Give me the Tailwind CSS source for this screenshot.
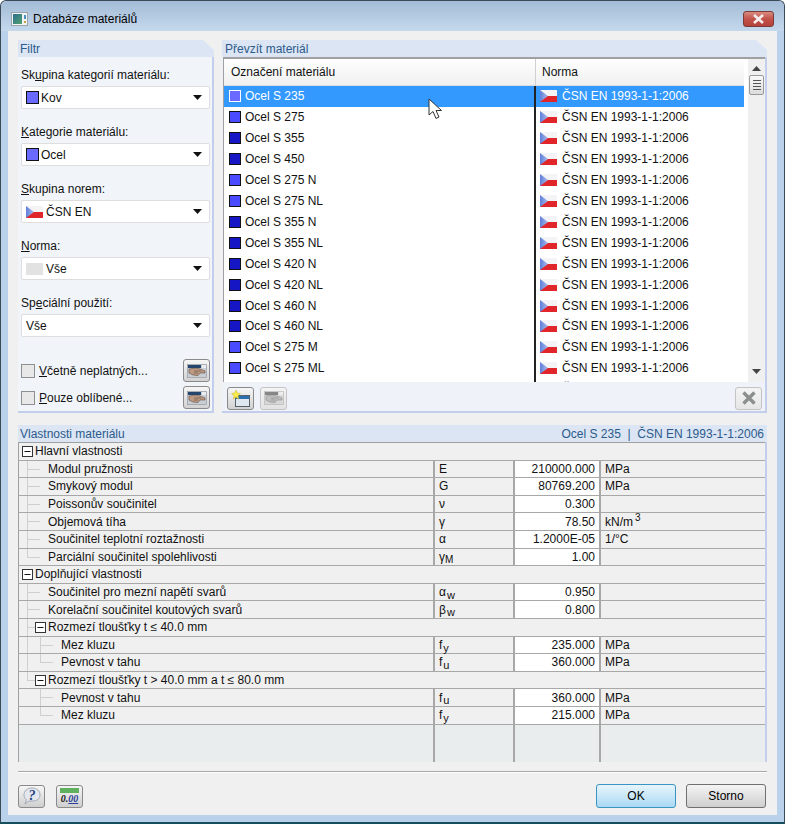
<!DOCTYPE html>
<html lang="en">

<head>
  <meta charset="UTF-8">
  <title>Databáze materiálů</title>
  <script src="https://cdn.jsdelivr.net/npm/@tailwindcss/browser@4"></script>
</head>

<body class="w-[785px] h-[824px] overflow-hidden bg-white font-['Liberation_Sans',sans-serif] text-[12px] text-[#111] leading-none">

  <svg width="0" height="0" class="absolute">
    <defs>
      <linearGradient id="flagblue" x1="0" x2="1" y1="0" y2="0"><stop offset="0" stop-color="#5f7fd8"/><stop offset="1" stop-color="#a9bcec"/></linearGradient>
      <linearGradient id="appicon" x1="0" x2="1" y1="0" y2="1"><stop offset="0" stop-color="#2f6f8f"/><stop offset="1" stop-color="#4fa06f"/></linearGradient>
      <symbol id="flag" viewBox="0 0 17 12">
        <rect width="17" height="6" fill="#f4f4f6"/>
        <rect y="6" width="17" height="6" fill="#e0252b"/>
        <path d="M0 0 L8 6 L0 12 Z" fill="url(#flagblue)"/>
      </symbol>
      <symbol id="hand" viewBox="0 0 20 16">
        <rect x=".5" y="1.500" width="19" height="13" fill="#c9ced4" stroke="#8a9098" stroke-width=".6"/>
        <rect x="1" y="2" width="13" height="3" fill="#24466e"/>
        <rect x="15" y="2" width="4" height="3" fill="#e9edf0"/>
        <path d="M2 6 L9 5 L13 6 L18 8 L18 10 L13 10 L11 12.500 L6 12 L2 10 Z" fill="#bf9a82" stroke="#5c4c42" stroke-width=".6"/>
        <path d="M7 8 H14 M7 10 H11" stroke="#5c4c42" stroke-width=".6"/>
      </symbol>
      <symbol id="minus" viewBox="0 0 11 11">
        <rect x=".5" y=".5" width="10" height="10" fill="#fff" stroke="#333"/>
        <path d="M2.500 5.500 H8.500" stroke="#111"/>
      </symbol>
    </defs>
  </svg>

  <div class="h-full flex flex-col rounded-t-[6px] border border-[#3b4a57] border-b-2 border-b-[#14505c] bg-[#b9d1ea]">

    <!-- title bar -->
    <div class="h-[30px] shrink-0 flex items-center pt-[6px] pl-[10px] pr-[10px] bg-linear-to-b from-[#a3bbd6] to-[#c5d9ed] rounded-t-[6px]">
      <svg width="17" height="14" viewBox="0 0 17 14" class="mr-[5px]">
        <rect x=".5" y=".5" width="16" height="13" fill="#f2f4f4" stroke="#9aa6ae"/>
        <rect x="2" y="2" width="9" height="10" fill="url(#appicon)"/>
        <rect x="13" y="3" width="2" height="4" fill="#4a90c0"/>
        <rect x="13" y="9" width="2" height="2" fill="#c9a040"/>
      </svg>
      <span class="text-[12px] text-black">Databáze materiálů</span>
      <div class="ml-auto w-[31px] h-[16px] flex items-center justify-center rounded-[3px] border border-[#7a3b38] bg-linear-to-b from-[#d98a80] via-[#c2524a] to-[#b5413b]">
        <svg width="13" height="10" viewBox="0 0 13 10"><path d="M2 1 L11 9 M11 1 L2 9" stroke="#f4eeee" stroke-width="2.600"/></svg>
      </div>
    </div>

    <!-- client area -->
    <div class="flex-1 mx-[7px] mb-[7px] bg-[#f0f0f0] flex flex-col px-[10px] pt-[9px]">

      <div class="flex gap-[8px] h-[373px] shrink-0">

        <!-- filter -->
        <div class="w-[197px] flex flex-col">
          <div class="h-[17px] shrink-0 pl-[2px] flex items-center bg-[#dbe5f3] text-[#2c5a8c] [clip-path:polygon(0_0,calc(100%-11px)_0,100%_10px,100%_100%,0_100%)]">Filtr</div>
          <div class="flex-1 flex flex-col border-r-2 border-b-2 border-[#c3cdec] bg-[#f1f5fa]">
            <div id="filters" class="flex flex-col pl-[3px] pr-[2px] pt-[9px]"></div>
            <div class="mt-[8px] pl-[3px] pr-[2px] flex flex-col gap-[4px]">
              <div class="flex items-center h-[23px]">
                <span class="w-[14px] h-[14px] border border-[#8e8f8f] bg-[#e8e8e8]"></span>
                <span class="ml-[4px]"><u>V</u>četně neplatných...</span>
                <button class="ml-auto w-[27px] h-[23px] rounded-[3px] border border-[#8a8a8a] bg-linear-to-b from-[#f6f6f6] to-[#d2d2d2] flex items-center justify-center"><svg width="20" height="16"><use href="#hand"/></svg></button>
              </div>
              <div class="flex items-center h-[23px]">
                <span class="w-[14px] h-[14px] border border-[#8e8f8f] bg-[#e8e8e8]"></span>
                <span class="ml-[4px]"><u>P</u>ouze oblíbené...</span>
                <button class="ml-auto w-[27px] h-[23px] rounded-[3px] border border-[#8a8a8a] bg-linear-to-b from-[#f6f6f6] to-[#d2d2d2] flex items-center justify-center"><svg width="20" height="16"><use href="#hand"/></svg></button>
              </div>
            </div>
          </div>
        </div>

        <!-- material list -->
        <div class="flex-1 flex flex-col">
          <div class="h-[17px] shrink-0 pl-[3px] flex items-center bg-[#dbe5f3] text-[#2c5a8c] [clip-path:polygon(0_0,calc(100%-11px)_0,100%_10px,100%_100%,0_100%)]">Převzít materiál</div>
          <div class="flex-1 flex flex-col border-r-2 border-b-2 border-[#c3cdec] bg-[#eff3f9]">
            <div class="h-[325px] shrink-0 ml-[1px] flex border-t-2 border-l border-[#a0a0a0] bg-white overflow-hidden">
              <div class="w-[520px] shrink-0 flex flex-col">
                <div class="h-[27px] shrink-0 flex bg-linear-to-b from-white to-[#f0f0f0] border-b border-[#dcdcdc]">
                  <div class="w-[312px] pl-[7px] flex items-center border-r border-[#d0d0d0]">Označení materiálu</div>
                  <div class="pl-[6px] flex items-center">Norma</div>
                </div>
                <div id="rows"></div>
              </div>
              <div class="w-[4px] shrink-0"></div>
              <!-- scrollbar -->
              <div class="w-[17px] shrink-0 bg-[#f0f0f0] flex flex-col items-center">
                <svg width="9" height="5" class="mt-[7px]"><path d="M4.500 0 L9 5 H0 Z" fill="#444"/></svg>
                <div class="mt-[4px] w-[15px] h-[20px] rounded-[2px] border border-[#9a9a9a] bg-linear-to-b from-[#fafafa] to-[#dcdcdc] flex flex-col items-center justify-center gap-[2px]">
                  <span class="w-[8px] h-px bg-[#555]"></span><span class="w-[8px] h-px bg-[#555]"></span><span class="w-[8px] h-px bg-[#555]"></span><span class="w-[8px] h-px bg-[#555]"></span>
                </div>
                <svg width="9" height="5" class="mt-auto mb-[8px]"><path d="M0 0 H9 L4.500 5 Z" fill="#444"/></svg>
              </div>
            </div>
            <!-- toolbar -->
            <div class="flex-1 flex items-center pt-[3px] pl-[5px] pr-[3px]">
              <button class="w-[27px] h-[23px] rounded-[3px] border border-[#8a8a8a] bg-linear-to-b from-[#f6f6f6] to-[#d2d2d2] flex items-center justify-center">
                <svg width="20" height="17" viewBox="0 0 20 17"><rect x="4.500" y="5.500" width="14" height="11" fill="#dfe8ee" stroke="#55606a"/><rect x="5" y="6" width="13" height="3" fill="#2c6fb0"/><path d="M5 0 L6.300 3 L9.500 3.500 L7 5.700 L7.700 9 L5 7.300 L2.300 9 L3 5.700 L.5 3.500 L3.700 3 Z" fill="#f7ec4a" stroke="#c9b530" stroke-width=".5"/></svg>
              </button>
              <button class="ml-[6px] w-[27px] h-[23px] rounded-[3px] border border-[#c4c4c4] bg-linear-to-b from-[#f4f4f4] to-[#e2e2e2] flex items-center justify-center">
                <svg width="20" height="16" class="grayscale opacity-60"><use href="#hand"/></svg>
              </button>
              <button class="ml-auto w-[27px] h-[23px] rounded-[3px] border border-[#c4c4c4] bg-linear-to-b from-[#f4f4f4] to-[#e6e6e6] flex items-center justify-center">
                <svg width="16" height="16" viewBox="0 0 16 16"><path d="M2.500 2.500 L13.500 13.500 M13.500 2.500 L2.500 13.500" stroke="#8b8f8d" stroke-width="3.400"/></svg>
              </button>
            </div>
          </div>
        </div>
      </div>

      <!-- properties -->
      <div class="mt-[12px] h-[337px] shrink-0 flex flex-col border-r-2 border-[#c3cdec]">
        <div class="h-[17px] shrink-0 -mr-[2px] pl-[2px] pr-[3px] flex items-center justify-between bg-[#dbe5f3] text-[#2c5a8c]">
          <span>Vlastnosti materiálu</span>
          <span class="whitespace-pre">Ocel S 235  |  ČSN EN 1993-1-1:2006</span>
        </div>
        <div id="props" class="flex-1 flex flex-col border-l border-t border-[#a0a0a0] bg-[#e9eded]"></div>
      </div>

      <div class="mt-[9px] h-px shrink-0 bg-[#a8a8a8] shadow-[0_1px_0_#fff]"></div>

      <!-- footer -->
      <div class="mt-[12px] flex items-center h-[24px]">
        <button class="w-[27px] h-[23px] rounded-[3px] border border-[#8a8a8a] bg-linear-to-b from-[#f6f6f6] to-[#cfcfcf] flex items-center justify-center">
          <svg width="20" height="18" viewBox="0 0 20 18"><path d="M10 1 C15 1 18 4 18 8 C18 12 15 14 10 14 L7 14 L3 17 L4.500 12.500 C2.800 11.500 2 10 2 8 C2 4 5 1 10 1 Z" fill="#e4e8ee" stroke="#a2aab6"/><text x="10" y="12.500" text-anchor="middle" font-family="Liberation Serif" font-style="italic" font-weight="700" font-size="14" fill="#24437c">?</text></svg>
        </button>
        <button class="ml-[11px] w-[27px] h-[23px] rounded-[3px] border border-[#8a8a8a] bg-linear-to-b from-[#f6f6f6] to-[#cfcfcf] flex flex-col items-center justify-center">
          <span class="w-[19px] h-[5px] bg-[#5fb05f]"></span>
          <span class="font-['Liberation_Serif',serif] italic font-bold text-[10px] text-[#222] leading-[12px]">0.<span class="text-[#2a3f9a] underline">00</span></span>
        </button>
        <button class="ml-auto w-[80px] h-[24px] rounded-[3px] border border-[#3a94c4] bg-linear-to-b from-[#e8f5fc] to-[#a9d9f3] text-black">OK</button>
        <button class="ml-[10px] w-[80px] h-[24px] mr-[1px] rounded-[3px] border border-[#707070] bg-linear-to-b from-[#f4f4f4] to-[#cfcfcf] text-black">Storno</button>
      </div>
    </div>
  </div>

  <!-- mouse pointer over the list -->
  <svg class="absolute left-[428px] top-[98px]" width="16" height="23" viewBox="0 0 16 23">
    <path d="M1 1 L1 17 L5 13.500 L8 20.500 L11 19 L8 12.500 L13.500 12.500 Z" fill="#fff" stroke="#333"/>
  </svg>

  <script>
    const filters = [
      { label: 'Sk<u>u</u>pina kategorií materiálu:', text: 'Kov', icon: 'swatch' },
      { label: '<u>K</u>ategorie materiálu:', text: 'Ocel', icon: 'swatch' },
      { label: '<u>S</u>kupina norem:', text: 'ČSN EN', icon: 'flag' },
      { label: '<u>N</u>orma:', text: 'Vše', icon: 'blank' },
      { label: 'Sp<u>e</u>ciální použití:', text: 'Vše', icon: '' },
    ];
    const icons = {
      swatch: '<span class="w-[13px] h-[13px] mr-[2px] border border-[#111] bg-[#6a6aff]"></span>',
      flag: '<svg width="17" height="12" class="mr-[3px]"><use href="#flag"/></svg>',
      blank: '<span class="w-[17px] h-[12px] mr-[3px] bg-[#e2e2e2]"></span>',
      '': '',
    };
    document.getElementById('filters').innerHTML = filters.map(f => `
      <div class="h-[57px] shrink-0">
        <div class="h-[18px] flex items-center">${f.label}</div>
        <div class="mt-[2px] h-[23px] flex items-center pl-[4px] pr-[7px] bg-white rounded-[2px] border border-[#dedede]">
          ${icons[f.icon]}<span>${f.text}</span>
          <svg width="9" height="5" class="ml-auto"><path d="M0 0 H9 L4.500 5 Z" fill="#111"/></svg>
        </div>
      </div>`).join('');

    const materials = [
      ['Ocel S 235', 0], ['Ocel S 275', 0], ['Ocel S 355', 1], ['Ocel S 450', 1], ['Ocel S 275 N', 0],
      ['Ocel S 275 NL', 0], ['Ocel S 355 N', 1], ['Ocel S 355 NL', 1], ['Ocel S 420 N', 1], ['Ocel S 420 NL', 1],
      ['Ocel S 460 N', 1], ['Ocel S 460 NL', 1], ['Ocel S 275 M', 0], ['Ocel S 275 ML', 0], ['Ocel S 355 M', 1],
    ];
    document.getElementById('rows').innerHTML = materials.map(([name, dark], i) => `
      <div class="h-[20.92px] flex ${i === 0 ? 'bg-[#3399ff] text-white' : ''}">
        <div class="w-[312px] shrink-0 pl-[5px] flex items-center border-r-2 border-[#222]">
          <span class="w-[12px] h-[12px] mr-[4px] border ${i === 0 ? 'border-white bg-[#6a6aff]' : dark ? 'border-[#111] bg-[#1616c4]' : 'border-[#111] bg-[#4a4aff]'}"></span>${name}
        </div>
        <div class="pl-[4px] flex items-center">
          <svg width="17" height="12" class="mr-[5px]"><use href="#flag"/></svg>ČSN EN 1993-1-1:2006
        </div>
      </div>`).join('');

    // g = group row, lvl = tree depth, trunk = the main group's line still runs past this row
    const sub = 'class="text-[11px] ml-px"';
    const props = [
      { g: 1, lvl: 0, name: 'Hlavní vlastnosti' },
      { lvl: 1, name: 'Modul pružnosti', sym: 'E', val: '210000.000', unit: 'MPa' },
      { lvl: 1, name: 'Smykový modul', sym: 'G', val: '80769.200', unit: 'MPa' },
      { lvl: 1, name: 'Poissonův součinitel', sym: 'ν', val: '0.300' },
      { lvl: 1, name: 'Objemová tíha', sym: 'γ', val: '78.50', unit: 'kN/m<sup class="text-[10px] ml-[2px]">3</sup>' },
      { lvl: 1, name: 'Součinitel teplotní roztažnosti', sym: 'α', val: '1.2000E-05', unit: '1/°C' },
      { lvl: 1, last: 1, name: 'Parciální součinitel spolehlivosti', sym: `γ<sub class="text-[10px]">M</sub>`, val: '1.00' },
      { g: 1, lvl: 0, name: 'Doplňující vlastnosti' },
      { lvl: 1, name: 'Součinitel pro mezní napětí svarů', sym: `α<sub ${sub}>w</sub>`, val: '0.950' },
      { lvl: 1, name: 'Korelační součinitel koutových svarů', sym: `β<sub ${sub}>w</sub>`, val: '0.800' },
      { g: 1, lvl: 1, name: 'Rozmezí tloušťky t ≤ 40.0 mm' },
      { lvl: 2, trunk: 1, name: 'Mez kluzu', sym: `f<sub ${sub}>y</sub>`, val: '235.000', unit: 'MPa' },
      { lvl: 2, trunk: 1, last: 1, name: 'Pevnost v tahu', sym: `f<sub ${sub}>u</sub>`, val: '360.000', unit: 'MPa' },
      { g: 1, lvl: 1, last: 1, name: 'Rozmezí tloušťky t &gt; 40.0 mm a t ≤ 80.0 mm' },
      { lvl: 2, name: 'Pevnost v tahu', sym: `f<sub ${sub}>u</sub>`, val: '360.000', unit: 'MPa' },
      { lvl: 2, last: 1, name: 'Mez kluzu', sym: `f<sub ${sub}>y</sub>`, val: '215.000', unit: 'MPa' },
    ];
    const cols = 'grid grid-cols-[414px_80px_86px_1fr]';
    function tree(p) {
      let out = '';
      if (p.lvl === 1 || p.trunk) {
        out += `<span class="absolute left-[8px] top-0 w-px ${p.last && p.lvl === 1 ? 'h-[9px]' : 'h-full'} bg-[#cfcfcf]"></span>`;
      }
      if (p.lvl === 1) {
        out += `<span class="absolute left-[8px] top-[8px] ${p.g ? 'w-[8px]' : 'w-[13px]'} h-px bg-[#cfcfcf]"></span>`;
      }
      if (p.lvl === 2) {
        out += `<span class="absolute left-[21px] top-0 w-px ${p.last ? 'h-[9px]' : 'h-full'} bg-[#cfcfcf]"></span>`;
        out += `<span class="absolute left-[21px] top-[8px] w-[13px] h-px bg-[#cfcfcf]"></span>`;
      }
      return out;
    }
    const indent = { 0: 'pl-[3px]', 1: 'pl-[16px]' };
    document.getElementById('props').innerHTML = props.map(p => {
      const box = '<svg width="11" height="11" class="mr-[2px] shrink-0 relative"><use href="#minus"/></svg>';
      if (p.g) {
        return `<div class="relative h-[17.6px] shrink-0 flex items-center ${indent[p.lvl]} bg-[#f0f0f0] border-b border-[#a8a8a8] whitespace-nowrap">${tree(p)}${box}<span>${p.name}</span></div>`;
      }
      return `<div class="${cols} h-[17.6px] shrink-0 bg-[#f0f0f0] border-b border-[#a8a8a8]">
        <div class="relative flex items-center ${p.lvl === 1 ? 'pl-[29px]' : 'pl-[42px]'} whitespace-nowrap">${tree(p)}${p.name}</div>
        <div class="flex items-center pl-[4px] border-l-2 border-[#a8a8a8]"><span>${p.sym}</span></div>
        <div class="flex items-center justify-end pr-[4px] bg-white border-l-2 border-[#a8a8a8]">${p.val}</div>
        <div class="flex items-center pl-[4px] border-l-2 border-[#a8a8a8]"><span>${p.unit || ''}</span></div>
      </div>`;
    }).join('') + `<div class="${cols} flex-1"><div></div><div class="border-l-2 border-[#a8a8a8]"></div><div class="border-l-2 border-[#a8a8a8]"></div><div class="border-l-2 border-[#a8a8a8]"></div></div>`;
  </script>

</body>

</html>
